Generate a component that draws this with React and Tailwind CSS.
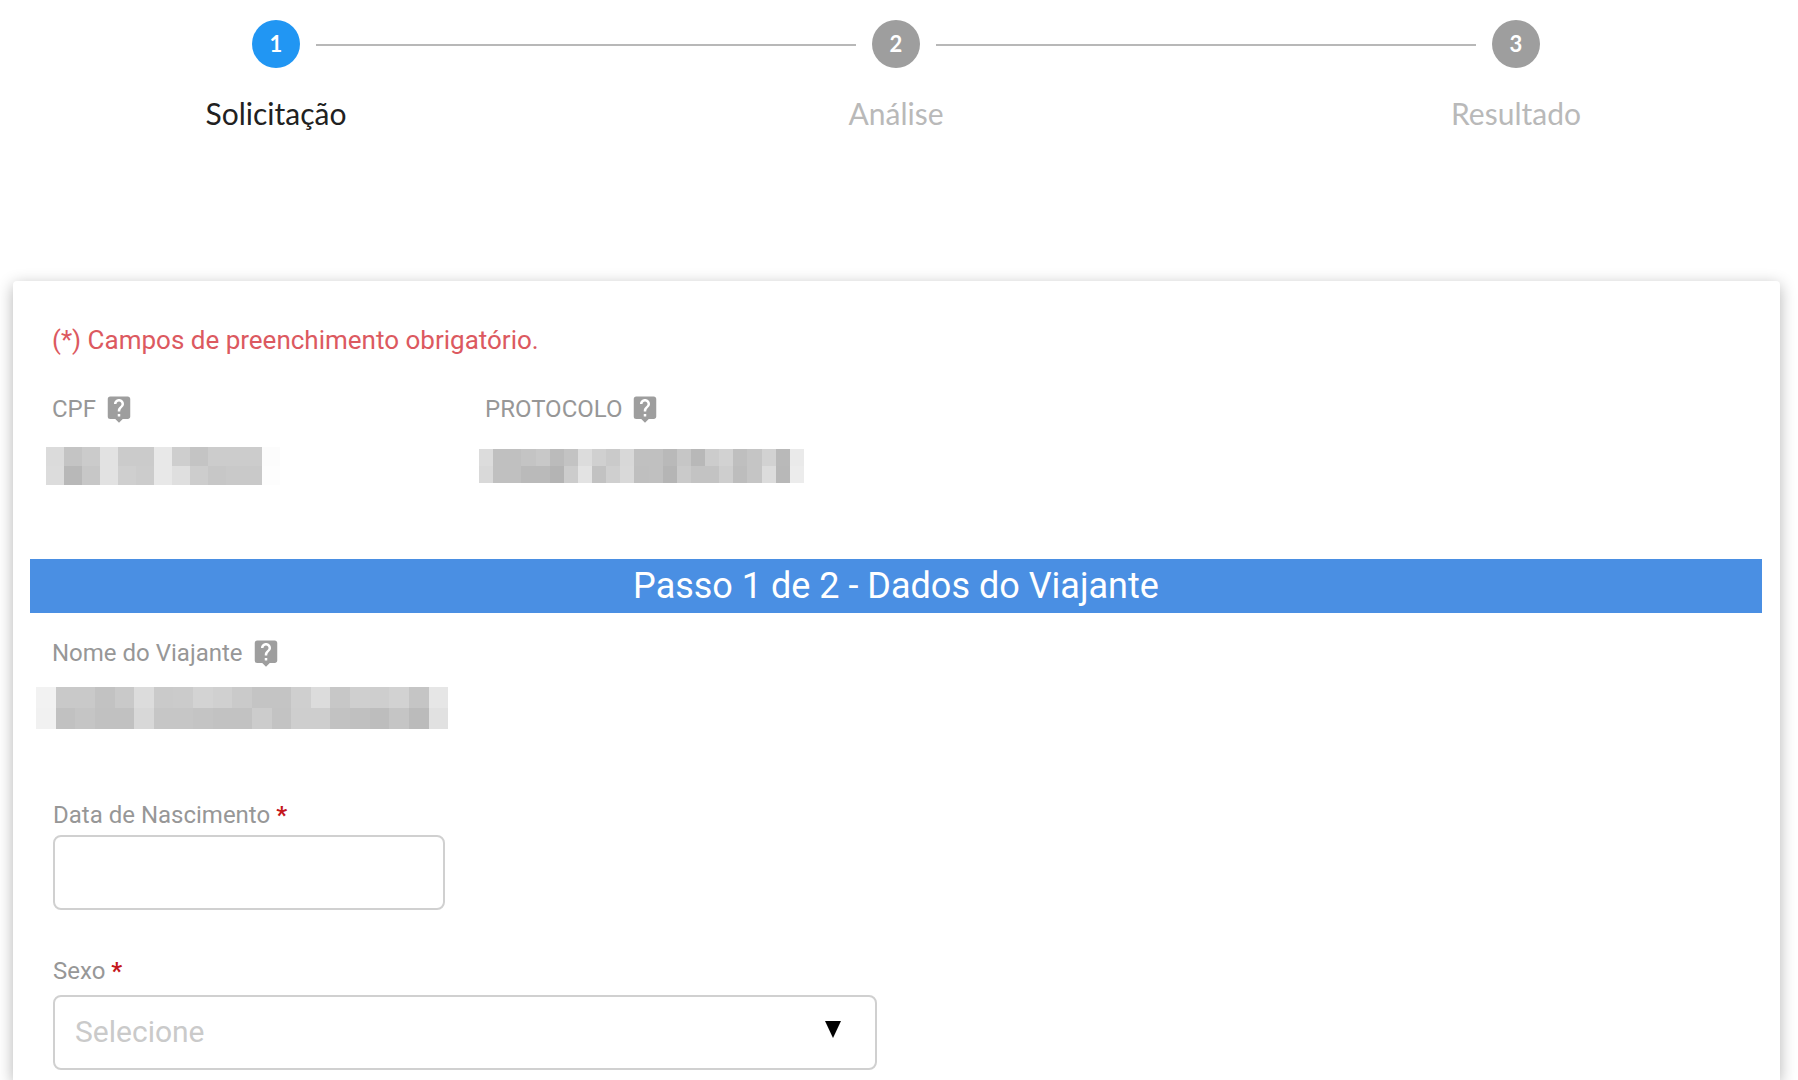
import { MdLiveHelp } from "react-icons/md";

const steps = [
  { number: 1, title: "Solicitação", active: true },
  { number: 2, title: "Análise", active: false },
  { number: 3, title: "Resultado", active: false },
];

// grey levels of the masked values, one hex pair per block
const cpfMask = [
  "db c4 cb e2 cb cb e8 ce c4 cc cc cc fc",
  "dc b8 c7 e2 cf cc e8 df cd c7 c9 c9 fd",
];

const protocolMask = [
  "dc c0 c0 c4 c8 bb c3 dc d0 ca d8 c0 c0 b9 c6 b8 cc d2 bf c5 d2 b9 ea",
  "d9 c0 c0 ba ba b4 cc e3 c2 cf d9 bf c0 b5 ca c3 c3 ce bd c5 dc b8 ec",
];

const nameMask = [
  "f2 c9 c9 c2 c9 dc ca cb d3 d0 ca c4 c4 cf dc c7 cf ce d2 c5 e6",
  "f1 c1 c5 c1 c1 d8 c6 c6 c4 c2 c2 cc c3 ce ce c2 c0 bd c5 bb e1",
];

const MaskedValue = ({ rows, label, className }) => (
  <div role="img" aria-label={label} className={`flex flex-col ${className}`}>
    {rows.map((row, i) => (
      <div key={i} className="flex flex-1">
        {row.split(" ").map((level, j) => (
          <span key={j} className="flex-1" style={{ backgroundColor: `#${level}${level}${level}` }} />
        ))}
      </div>
    ))}
  </div>
);

const Step = ({ number, title, active }) => (
  <li className="flex w-[350px] min-w-0 flex-col items-center gap-8">
    <span
      className={`flex size-12 items-center justify-center rounded-full text-[22px] font-bold text-white ${
        active ? "bg-[#2196f3]" : "bg-[#9e9e9e]"
      }`}
    >
      {number}
    </span>
    <span className={`text-3xl leading-[26px] ${active ? "text-[#212121]" : "text-[#b9b9b9]"}`}>{title}</span>
  </li>
);

const StepLine = () => <li aria-hidden="true" className="-mx-[135px] mt-6 h-0.5 flex-1 bg-[#b8b8b8]" />;

const Help = ({ topic }) => (
  <button type="button" aria-label={`Ajuda: ${topic}`} className="text-[#9e9e9e]">
    <MdLiveHelp size={30} />
  </button>
);

const Required = () => <span className="font-bold text-[#c4161c]">*</span>;

export default function App() {
  return (
    <div className="flex min-h-screen flex-col bg-white font-[Roboto,sans-serif] text-2xl leading-7 text-[#979797]">
      <ol className="flex items-start pt-5 pr-[107px] pl-[101px] font-[Lato,sans-serif]">
        <Step {...steps[0]} />
        <StepLine />
        <Step {...steps[1]} />
        <StepLine />
        <Step {...steps[2]} />
      </ol>

      <form className="mt-[155px] mr-[18px] ml-[13px] flex-1 rounded-t bg-white pt-11 pr-[18px] pb-2.5 pl-[17px] shadow-[0_4px_16px_rgba(0,0,0,0.3)]">
        <p className="px-[22px] text-[26px] leading-[30px] text-[#dc5960]">(*) Campos de preenchimento obrigatório.</p>

        <div className="mt-10 grid grid-cols-4">
          <div className="pr-[18px] pl-[22px]">
            <div className="flex h-7 items-center gap-2">
              CPF <Help topic="CPF" />
            </div>
            <MaskedValue rows={cpfMask} label="CPF oculto" className="mt-6 -ml-1.5 h-[38px] w-[234px]" />
          </div>
          <div className="pr-[18px] pl-[22px]">
            <div className="flex h-7 items-center gap-2">
              PROTOCOLO <Help topic="Protocolo" />
            </div>
            <MaskedValue rows={protocolMask} label="Protocolo oculto" className="mt-[26px] -ml-1.5 h-[34px] w-[325px]" />
          </div>
        </div>

        <h2 className="mt-[74px] bg-[#4a8fe3] text-center text-4xl leading-[54px] text-white">
          Passo 1 de 2 - Dados do Viajante
        </h2>

        <div className="mt-[26px] grid grid-cols-4">
          <div className="pr-[18px] pl-[22px]">
            <div className="flex h-7 items-center gap-2">
              Nome do Viajante <Help topic="Nome do Viajante" />
            </div>
            <MaskedValue rows={nameMask} label="Nome oculto" className="mt-5 -ml-4 h-[42px] w-[412px]" />
          </div>
        </div>

        <div className="mt-[72px] grid grid-cols-4">
          <div className="pr-[18px] pl-[23px]">
            <label htmlFor="birth" className="block">
              Data de Nascimento <Required />
            </label>
            <input
              id="birth"
              type="text"
              required
              className="mt-1.5 block h-[75px] w-full rounded-lg border-2 border-[#d0d0d0] px-5 text-3xl text-[#212121]"
            />
          </div>
        </div>

        <div className="mt-[47px] grid grid-cols-2">
          <div className="pr-[19px] pl-[23px]">
            <label htmlFor="sex" className="block">
              Sexo <Required />
            </label>
            <div className="relative mt-2.5">
              <select
                id="sex"
                required
                defaultValue=""
                className="block h-[75px] w-full appearance-none rounded-lg border-2 border-[#d0d0d0] bg-white px-5 pb-0.5 text-3xl text-[#cacaca]"
              >
                <option value="">Selecione</option>
                <option value="F">Feminino</option>
                <option value="M">Masculino</option>
              </select>
              <svg
                viewBox="0 0 16 17"
                className="pointer-events-none absolute top-[26px] right-9 h-[17px] w-4 fill-black"
                aria-hidden="true"
              >
                <path d="M0 0h16L8 17z" />
              </svg>
            </div>
          </div>
        </div>
      </form>
    </div>
  );
}
